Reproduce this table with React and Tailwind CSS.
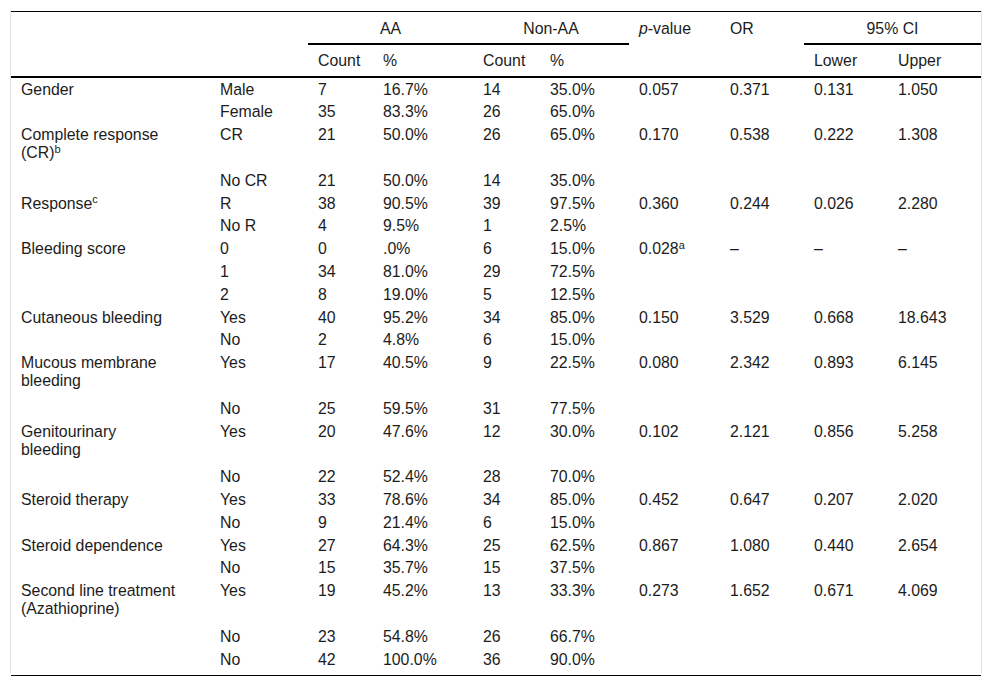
import React from "react";

const rows = [
  { h: 1, c: ["Gender", "Male", "7", "16.7%", "14", "35.0%", "0.057", "0.371", "0.131", "1.050"] },
  { h: 1, c: ["", "Female", "35", "83.3%", "26", "65.0%", "", "", "", ""] },
  { h: 2, c: [<>Complete response<br />(CR)<sup className="text-[11px]">b</sup></>, "CR", "21", "50.0%", "26", "65.0%", "0.170", "0.538", "0.222", "1.308"] },
  { h: 1, c: ["", "No CR", "21", "50.0%", "14", "35.0%", "", "", "", ""] },
  { h: 1, c: [<>Response<sup className="text-[11px]">c</sup></>, "R", "38", "90.5%", "39", "97.5%", "0.360", "0.244", "0.026", "2.280"] },
  { h: 1, c: ["", "No R", "4", "9.5%", "1", "2.5%", "", "", "", ""] },
  { h: 1, c: ["Bleeding score", "0", "0", ".0%", "6", "15.0%", <>0.028<sup className="text-[11px]">a</sup></>, "–", "–", "–"] },
  { h: 1, c: ["", "1", "34", "81.0%", "29", "72.5%", "", "", "", ""] },
  { h: 1, c: ["", "2", "8", "19.0%", "5", "12.5%", "", "", "", ""] },
  { h: 1, c: ["Cutaneous bleeding", "Yes", "40", "95.2%", "34", "85.0%", "0.150", "3.529", "0.668", "18.643"] },
  { h: 1, c: ["", "No", "2", "4.8%", "6", "15.0%", "", "", "", ""] },
  { h: 2, c: [<>Mucous membrane<br />bleeding</>, "Yes", "17", "40.5%", "9", "22.5%", "0.080", "2.342", "0.893", "6.145"] },
  { h: 1, c: ["", "No", "25", "59.5%", "31", "77.5%", "", "", "", ""] },
  { h: 2, c: [<>Genitourinary<br />bleeding</>, "Yes", "20", "47.6%", "12", "30.0%", "0.102", "2.121", "0.856", "5.258"] },
  { h: 1, c: ["", "No", "22", "52.4%", "28", "70.0%", "", "", "", ""] },
  { h: 1, c: ["Steroid therapy", "Yes", "33", "78.6%", "34", "85.0%", "0.452", "0.647", "0.207", "2.020"] },
  { h: 1, c: ["", "No", "9", "21.4%", "6", "15.0%", "", "", "", ""] },
  { h: 1, c: ["Steroid dependence", "Yes", "27", "64.3%", "25", "62.5%", "0.867", "1.080", "0.440", "2.654"] },
  { h: 1, c: ["", "No", "15", "35.7%", "15", "37.5%", "", "", "", ""] },
  { h: 2, c: [<>Second line treatment<br />(Azathioprine)</>, "Yes", "19", "45.2%", "13", "33.3%", "0.273", "1.652", "0.671", "4.069"] },
  { h: 1, c: ["", "No", "23", "54.8%", "26", "66.7%", "", "", "", ""] },
  { h: 1, c: ["", "No", "42", "100.0%", "36", "90.0%", "", "", "", ""] },
];

export default function App() {
  return (
    <div className="min-h-[685px] w-[992px] bg-white pt-[10px] font-['Liberation_Sans',Arial,Helvetica,sans-serif] text-[15.85px] text-[#1c1c1c]">
      <div className="ml-[10px] w-[972px] border-x border-[#e4e4e4] pt-[1px] pb-[2px]">
        <div className="border-t border-black">
          {/* header row 1 */}
          <div className="grid h-[33px] grid-cols-[199px_98px_65px_100px_67px_89px_91px_84px_84px_93px]">
            <div className="col-span-2" />
            <div className="col-span-2 border-b-2 border-black pt-[7.5px] text-center leading-[18px]">AA</div>
            <div className="col-span-2 border-b-2 border-black pt-[7.5px] text-center leading-[18px]">Non-AA</div>
            <div className="pl-[10px] pt-[7.5px] leading-[18px]">
              <i>p</i>-value
            </div>
            <div className="pl-[10px] pt-[7.5px] leading-[18px]">OR</div>
            <div className="col-span-2 border-b-2 border-black pt-[7.5px] text-center leading-[18px]">95% CI</div>
          </div>
          {/* header row 2 */}
          <div className="grid h-[33px] grid-cols-[199px_98px_65px_100px_67px_89px_91px_84px_84px_93px] border-b-2 border-black">
            <div />
            <div />
            <div className="pl-[10px] pt-[7px] leading-[18px]">Count</div>
            <div className="pl-[10px] pt-[7px] leading-[18px]">%</div>
            <div className="pl-[10px] pt-[7px] leading-[18px]">Count</div>
            <div className="pl-[10px] pt-[7px] leading-[18px]">%</div>
            <div />
            <div />
            <div className="pl-[10px] pt-[7px] leading-[18px]">Lower</div>
            <div className="pl-[10px] pt-[7px] leading-[18px]">Upper</div>
          </div>
          {/* body */}
          {rows.map((r, i) => (
            <div
              key={i}
              className={
                r.h === 2
                  ? "grid h-[45.6px] grid-cols-[199px_98px_65px_100px_67px_89px_91px_84px_84px_93px]"
                  : "grid h-[22.8px] grid-cols-[199px_98px_65px_100px_67px_89px_91px_84px_84px_93px]"
              }
            >
              {r.c.map((cell, j) => (
                <div key={j} className="whitespace-nowrap pl-[10px] pt-[2.7px] leading-[18px]">
                  {cell}
                </div>
              ))}
            </div>
          ))}
        </div>
      </div>
      <div className="ml-[11px] mt-[2px] h-[1px] w-[970px] bg-black" />
    </div>
  );
}
